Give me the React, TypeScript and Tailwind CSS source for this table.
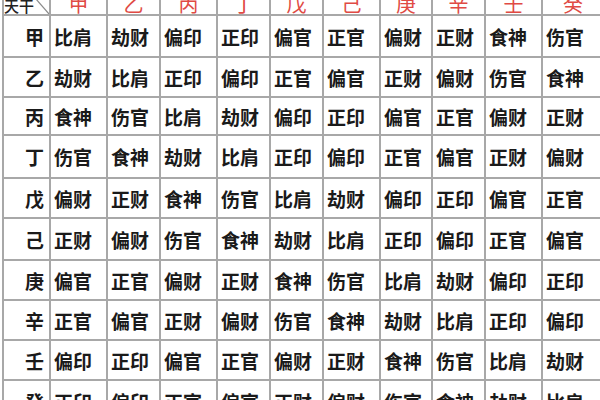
import React from "react";

const stems = ["甲", "乙", "丙", "丁", "戊", "己", "庚", "辛", "壬", "癸"];
const rows: string[][] = [
  ["比肩", "劫财", "偏印", "正印", "偏官", "正官", "偏财", "正财", "食神", "伤官"],
  ["劫财", "比肩", "正印", "偏印", "正官", "偏官", "正财", "偏财", "伤官", "食神"],
  ["食神", "伤官", "比肩", "劫财", "偏印", "正印", "偏官", "正官", "偏财", "正财"],
  ["伤官", "食神", "劫财", "比肩", "正印", "偏印", "正官", "偏官", "正财", "偏财"],
  ["偏财", "正财", "食神", "伤官", "比肩", "劫财", "偏印", "正印", "偏官", "正官"],
  ["正财", "偏财", "伤官", "食神", "劫财", "比肩", "正印", "偏印", "正官", "偏官"],
  ["偏官", "正官", "偏财", "正财", "食神", "伤官", "比肩", "劫财", "偏印", "正印"],
  ["正官", "偏官", "正财", "偏财", "伤官", "食神", "劫财", "比肩", "正印", "偏印"],
  ["偏印", "正印", "偏官", "正官", "偏财", "正财", "食神", "伤官", "比肩", "劫财"],
  ["正印", "偏印", "正官", "偏官", "正财", "偏财", "伤官", "食神", "劫财", "比肩"],
];

const font = { fontFamily: '"Noto Sans CJK SC", "Noto Sans", sans-serif' };

export default function App() {
  return (
    <div className="w-[600px] h-[400px] overflow-hidden bg-white" style={font}>
      <div className="ml-[2px] -mt-[26px] w-[620px] p-[2px] bg-[#a8a8a8] grid gap-[2px] grid-cols-[45px_55px_51px_55px_51px_51px_55px_50px_51px_55px_60px] grid-rows-[38px_40px_38px_36px_41px_38px_40px_38px_38px_38px_40px]">
        <div className="relative bg-white flex items-end">
          <svg className="absolute inset-0" width="45" height="38" viewBox="0 0 45 38">
            <line x1="12" y1="0" x2="45" y2="38" stroke="#8a8a8a" strokeWidth="1.2" />
          </svg>
          <span className="relative text-[15px] leading-none font-medium text-[#222] pb-[1px]">天干</span>
        </div>
        {stems.map((s) => (
          <div key={s} className="bg-white flex items-end justify-center">
            <span className="text-[20px] leading-none text-[#e04a44]">{s}</span>
          </div>
        ))}
        {rows.map((r, i) => (
          <React.Fragment key={i}>
            <div className="bg-white flex items-center justify-end pr-[5px]">
              <span className="text-[19px] leading-none font-semibold text-[#1a1a1a]">{stems[i]}</span>
            </div>
            {r.map((c, j) => (
              <div key={j} className="bg-white flex items-center pl-[3px]">
                <span className="text-[19px] leading-none font-semibold text-[#1a1a1a] whitespace-nowrap">{c}</span>
              </div>
            ))}
          </React.Fragment>
        ))}
      </div>
    </div>
  );
}
